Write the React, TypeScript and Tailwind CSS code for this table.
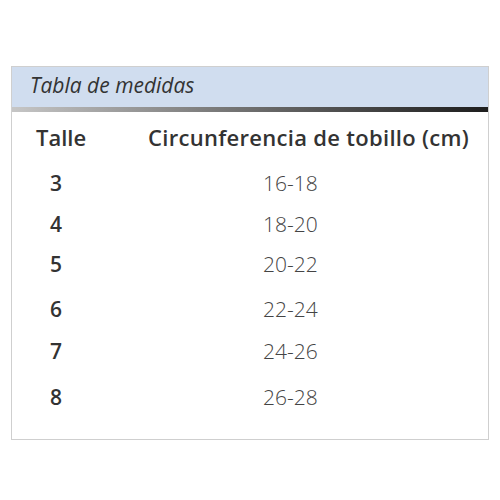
export default function App() {
  const rows: { t: string; v: string; mt: string }[] = [
    { t: "3", v: "16-18", mt: "mt-0" },
    { t: "4", v: "18-20", mt: "mt-[1px]" },
    { t: "5", v: "20-22", mt: "mt-0" },
    { t: "6", v: "22-24", mt: "mt-[5px]" },
    { t: "7", v: "24-26", mt: "mt-[2px]" },
    { t: "8", v: "26-28", mt: "mt-[6px]" },
  ];
  return (
    <div
      className="w-[500px] h-[500px] bg-white pt-[66px] pl-[11px]"
      style={{ fontFamily: '"Open Sans", "Noto Sans", sans-serif' }}
    >
      <div className="w-[478px] h-[374px] border border-[#cfcfcf] flex flex-col">
        <div className="h-[40px] bg-[#d0ddef] flex items-center pl-[18px] pb-[2px]">
          <span className="italic text-[21px] text-[#333]">Tabla de medidas</span>
        </div>
        <div className="h-[5px] bg-gradient-to-r from-[#c6c6c6] via-[#6e6e6e] to-[#1e1e1e]" />
        <div className="h-[52px] flex items-center pb-[2px] text-[22px] font-semibold text-[#333] tracking-[0.3px]">
          <span className="w-[136px] pl-[24px] tracking-[0px]">Talle</span>
          <span>Circunferencia de tobillo (cm)</span>
        </div>
        {rows.map((r) => (
          <div key={r.t} className={`h-[40px] flex items-center ${r.mt}`}>
            <span className="w-[251px] pl-[38px] text-[21px] font-semibold text-[#333]">{r.t}</span>
            <span className="text-[21px] font-light text-[#444]">{r.v}</span>
          </div>
        ))}
      </div>
    </div>
  );
}
